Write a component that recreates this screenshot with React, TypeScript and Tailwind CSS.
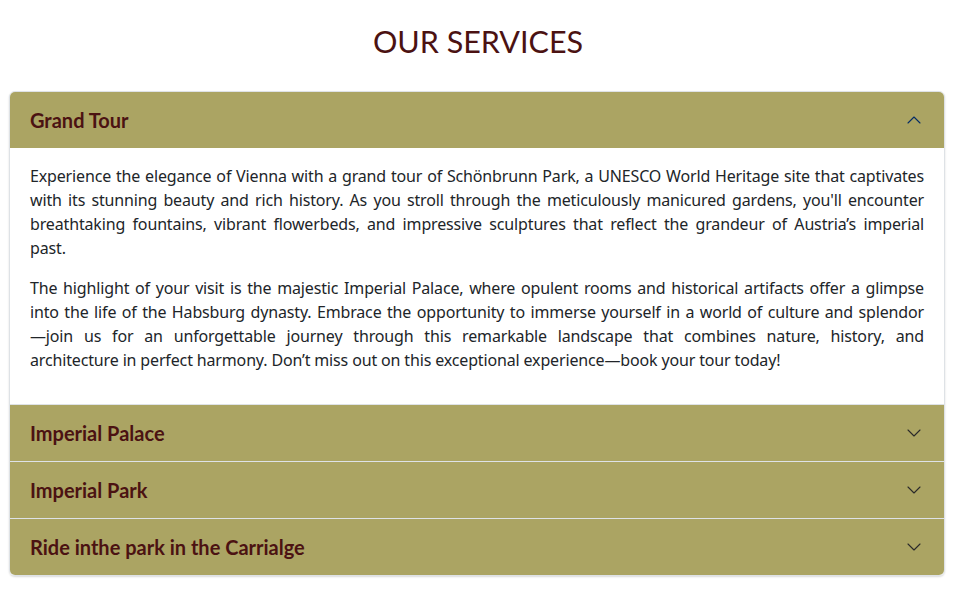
import React from "react";

const Chevron = ({ up, color }: { up?: boolean; color: string }) => (
  <svg width="16" height="16" viewBox="0 0 16 16" fill="none" stroke={color} strokeWidth="1.1" strokeLinecap="round" strokeLinejoin="round" className={up ? "rotate-180" : ""}>
    <path d="M2 5L8 11L14 5" />
  </svg>
);

const Header = ({ title, open }: { title: string; open?: boolean }) => (
  <div className="flex h-[56px] items-center justify-between bg-[#aba463] pl-5 pr-[22px]">
    <span className="text-[20px] font-bold leading-[24px] text-[#4b1212]" style={{ fontFamily: "Lato, sans-serif" }}>{title}</span>
    <Chevron up={open} color={open ? "#052c65" : "#2a2a2a"} />
  </div>
);

const Para = ({ lines }: { lines: string[] }) => (
  <p className="mb-4">
    {lines.map((l, i) => (
      <span key={i} className={i < lines.length - 1 ? "block text-justify [text-align-last:justify]" : "block text-left"}>
        {l}
      </span>
    ))}
  </p>
);

export default function App() {
  return (
    <div className="min-h-[600px] bg-white pt-[22px]">
      <h1 className="text-center text-[30.5px] leading-[38px] text-[#4b1212]" style={{ fontFamily: "Lato, sans-serif" }}>OUR SERVICES</h1>
      <div className="ml-[9px] mt-[31px] w-[936px] overflow-hidden rounded-[6px] border border-[#dee2e6] shadow-[0_1px_2px_rgba(0,0,0,0.15)]">
        <div className="shadow-[inset_0_-1px_0_#dee2e6]"><Header title="Grand Tour" open /></div>
        <div className="bg-white px-5 py-4 text-[16px] leading-[24px] tracking-[-0.15px] text-[#212529]" style={{ fontFamily: "'Noto Sans', sans-serif" }}>
          <Para
            lines={[
              "Experience the elegance of Vienna with a grand tour of Schönbrunn Park, a UNESCO World Heritage site that captivates",
              "with its stunning beauty and rich history. As you stroll through the meticulously manicured gardens, you'll encounter",
              "breathtaking fountains, vibrant flowerbeds, and impressive sculptures that reflect the grandeur of Austria’s imperial",
              "past.",
            ]}
          />
          <Para
            lines={[
              "The highlight of your visit is the majestic Imperial Palace, where opulent rooms and historical artifacts offer a glimpse",
              "into the life of the Habsburg dynasty. Embrace the opportunity to immerse yourself in a world of culture and splendor",
              "—join us for an unforgettable journey through this remarkable landscape that combines nature, history, and",
              "architecture in perfect harmony. Don’t miss out on this exceptional experience—book your tour today!",
            ]}
          />
        </div>
        <div className="border-t border-[#dee2e6]"><Header title="Imperial Palace" /></div>
        <div className="border-t border-[#dee2e6]"><Header title="Imperial Park" /></div>
        <div className="border-t border-[#dee2e6]"><Header title="Ride inthe park in the Carrialge" /></div>
      </div>
    </div>
  );
}
